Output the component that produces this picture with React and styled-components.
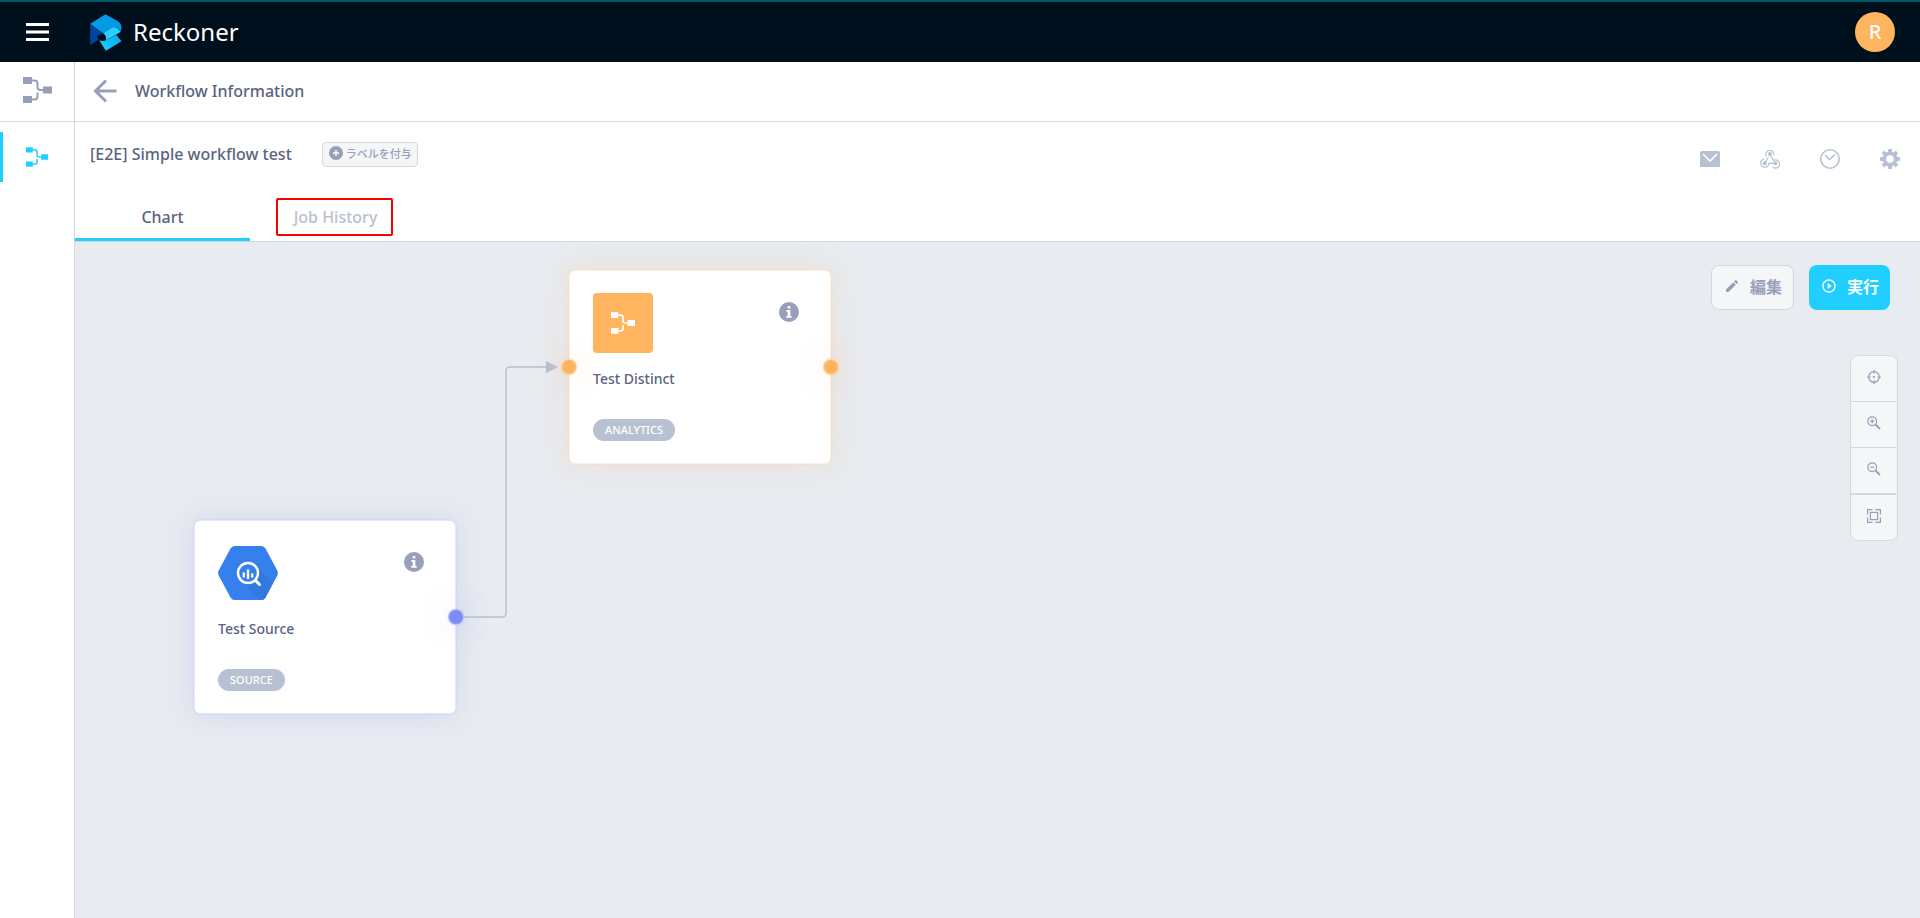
import React, { useState } from 'react';
import styled, { createGlobalStyle } from 'styled-components';
import { MdEdit, MdPlayCircleOutline } from 'react-icons/md';

const colors = {
  cyan: '#20cfff',
  orange: '#ffb55f',
  violet: '#7a8cf5',
  line: '#d0d9e1',
  text: '#5b6382',
  icon: '#979fb9',
  muted: '#b7c1d1',
  canvas: '#e8ebf0',
  panel: '#f4f6f8',
};

const GlobalStyle = createGlobalStyle`
  * {
    box-sizing: border-box;
  }

  body {
    margin: 0;
    background: #fff;
    color: ${colors.text};
    font-family: 'Noto Sans', 'Noto Sans CJK JP', sans-serif;
    font-size: 16px;
    font-weight: 500;
  }

  button {
    margin: 0;
    padding: 0;
    border: none;
    background: none;
    color: inherit;
    font: inherit;
    cursor: pointer;
  }

  svg {
    display: block;
    flex-shrink: 0;
  }
`;

const Page = styled.div`
  display: flex;
  flex-direction: column;
  min-height: 100vh;
`;

const TopBar = styled.header`
  display: flex;
  align-items: center;
  height: 62px;
  padding: 0 25px 0 26px;
  border-top: 2px solid #00586a;
  background: #000f1c;
  color: #fff;
`;

const Brand = styled.a`
  display: flex;
  align-items: center;
  gap: 11px;
  margin-left: 41px;
  color: #fff;
  font-size: 24px;
  font-weight: 400;
  line-height: 36px;
  text-decoration: none;
`;

const Avatar = styled.button`
  width: 40px;
  height: 40px;
  margin-left: auto;
  border-radius: 50%;
  background: ${colors.orange};
  font-size: 20px;
  line-height: 40px;
`;

const Body = styled.div`
  display: flex;
  flex: 1;
`;

const Sidebar = styled.nav`
  display: flex;
  flex-direction: column;
  width: 75px;
  border-right: 1px solid ${colors.line};
`;

const SidebarHead = styled.div`
  display: flex;
  align-items: center;
  justify-content: center;
  height: 60px;
  margin-bottom: 10px;
  padding-bottom: 4px;
  border-bottom: 1px solid ${colors.line};
  color: ${colors.icon};
`;

const SidebarLink = styled.a`
  display: flex;
  align-items: center;
  justify-content: center;
  height: 50px;
  padding-right: 3px;
  border-left: 3px solid ${colors.cyan};
  color: ${colors.cyan};
`;

const Main = styled.main`
  display: flex;
  flex: 1;
  flex-direction: column;
  min-width: 0;
`;

const PageHead = styled.div`
  display: flex;
  align-items: center;
  gap: 18px;
  height: 60px;
  padding: 0 18px 2px;
  border-bottom: 1px solid ${colors.line};
`;

const PageTitle = styled.h1`
  margin: 0;
  font-size: 16px;
  font-weight: 500;
  line-height: 24px;
`;

const BackButton = styled.button`
  color: ${colors.icon};
`;

const WorkflowHead = styled.div`
  display: flex;
  align-items: center;
  height: 72px;
  padding: 0 20px 8px 15px;
`;

const WorkflowName = styled.h2`
  margin: 0 30px 0 0;
  font-size: 16px;
  font-weight: 500;
  line-height: 24px;
`;

const LabelButton = styled.button`
  display: flex;
  align-items: center;
  gap: 3px;
  height: 25px;
  padding: 0 5px 2px 6px;
  border: 1px solid ${colors.line};
  border-radius: 4px;
  background: ${colors.panel};
  color: ${colors.icon};
  font-size: 11px;
`;

const HeadActions = styled.div`
  display: flex;
  gap: 40px;
  margin-left: auto;
  padding-top: 10px;
  color: ${colors.muted};
`;

const Tabs = styled.div`
  display: flex;
  height: 48px;
  border-bottom: 1px solid ${colors.line};
`;

const Tab = styled.button`
  display: flex;
  align-items: center;
  justify-content: center;
  width: 175px;
  padding-top: 2px;
  border-bottom: 3px solid ${({ $active }) => ($active ? colors.cyan : 'transparent')};
  color: ${({ $active }) => ($active ? colors.text : colors.muted)};
`;

const Marked = styled.span`
  margin-right: 6px;
  padding: 5px 14px 5px 16px;
  border: 2px solid #f60000;
  border-radius: 2px;
  line-height: 24px;
`;

const Canvas = styled.section`
  position: relative;
  flex: 1;
  min-height: 560px;
  background: ${colors.canvas};
  overflow: hidden;
`;

const Edges = styled.svg`
  position: absolute;
  top: 0;
  left: 0;
  width: 100%;
  height: 100%;
`;

const Node = styled.article`
  position: absolute;
  display: flex;
  flex-direction: column;
  align-items: flex-start;
  width: 262px;
  height: 194px;
  padding: 22px 23px;
  border: 1px solid rgba(${({ $glow }) => $glow}, 0.2);
  border-radius: 6px;
  background: #fff;
  box-shadow: 0 0 2px rgba(${({ $glow }) => $glow}, 0.25), 0 0 30px rgba(${({ $glow }) => $glow}, 0.2);
`;

const NodeTop = styled.div`
  display: flex;
  justify-content: space-between;
  width: 100%;
  padding-right: 8px;
`;

const InfoButton = styled.button`
  align-self: flex-start;
  margin-top: 9px;
`;

const NodeIcon = styled.div`
  display: flex;
  align-items: center;
  justify-content: center;
  width: 60px;
  height: 60px;
  border-radius: 4px;
  background: ${({ $fill }) => $fill || 'transparent'};
  color: #fff;
`;

const NodeName = styled.h3`
  margin: 16px 0 30px;
  font-size: 14px;
  font-weight: 500;
  line-height: 20px;
`;

const Tag = styled.span`
  padding: 0 12px;
  border-radius: 11px;
  background: ${colors.muted};
  color: #fff;
  font-size: 11px;
  line-height: 22px;
`;

const Port = styled.span`
  position: absolute;
  top: 88px;
  ${({ $side }) => $side}: -9px;
  width: 16px;
  height: 16px;
  border: 1px solid rgba(255, 255, 255, 0.5);
  border-radius: 50%;
  background: ${({ $fill }) => $fill};
  box-shadow: 0 0 2px rgba(${({ $glow }) => $glow}, 0.4), 0 0 30px rgba(${({ $glow }) => $glow}, 0.25);
`;

const CanvasActions = styled.div`
  position: absolute;
  top: 23px;
  right: 30px;
  display: flex;
  gap: 15px;
`;

const ActionButton = styled.button`
  display: flex;
  align-items: center;
  gap: 10px;
  height: 45px;
  padding: 0 11px 4px 12px;
  border: ${({ $primary }) => ($primary ? 'none' : `1px solid ${colors.line}`)};
  border-radius: 8px;
  background: ${({ $primary }) => ($primary ? colors.cyan : colors.panel)};
  color: ${({ $primary }) => ($primary ? '#fff' : colors.icon)};
  font-weight: 700;
`;

const ZoomBar = styled.div`
  position: absolute;
  top: 113px;
  right: 22px;
  display: flex;
  flex-direction: column;
  width: 48px;
  padding-right: 1px;
  border: 1px solid ${colors.line};
  border-radius: 8px;
  background: ${colors.panel};
`;

const ZoomButton = styled.button`
  display: flex;
  align-items: center;
  justify-content: center;
  height: 46px;
  padding-bottom: 3px;
  color: ${colors.icon};

  &:not(:last-child) {
    border-bottom: 1px solid ${colors.line};
  }

  &:last-child {
    border-top: 1px solid ${colors.line};
  }
`;

const MenuIcon = () => (
  <svg width="23" height="20" viewBox="0 0 23 20" fill="#fff">
    <path d="M0 1h23v3H0zM0 8.500h23v3H0zM0 16h23v3H0z" />
  </svg>
);

const Logo = () => (
  <svg width="32" height="37" viewBox="270 40 95 111">
    <defs>
      <linearGradient id="ribbon" x1="0" y1="1" x2="1" y2="0">
        <stop offset="0" stopColor="#19d3ff" />
        <stop offset="1" stopColor="#0aa5f5" />
      </linearGradient>
    </defs>
    <path fill="#00439c" d="M270 69L309 97L290 107L295 117L270 134Z" />
    <path fill="#009be6" d="M270 69L316 41L352 61Q364 68 364 82L361 94Q355 78 338 79L309 98Z" />
    <path fill="#2bcfff" d="M309 98L338 79Q354 79 361 94L318 119Q319 104 309 98Z" />
    <path fill="url(#ribbon)" d="M297 119Q307 123 318 119L348 102L364 122L317 150Z" />
  </svg>
);

const FlowIcon = ({ width = 29 }) => (
  <svg width={width} height={Math.round(width * 0.9)} viewBox="0 0 29 26" fill="none" stroke="currentColor" strokeWidth="2">
    <path fill="currentColor" stroke="none" d="M0 0h9v7H0zM0 19h9v7H0zM20 9.500h9v7h-9z" />
    <path d="M9 3.500h2.500q3 0 3 3v3.500q0 3 3 3H20M9 22.500h2.500q3 0 3-3V15.500" />
  </svg>
);

const BackIcon = () => (
  <svg width="24" height="24" viewBox="0 0 24 24" fill="none" stroke="currentColor" strokeWidth="3">
    <path d="M23.500 12H2M13 1.500L2.500 12L13 22.500" />
  </svg>
);

const PlusIcon = () => (
  <svg width="14" height="14" viewBox="0 0 14 14">
    <circle cx="7" cy="7" r="7" fill="currentColor" />
    <path stroke="#fff" strokeWidth="1.4" d="M7 4v6M4 7h6" />
  </svg>
);

const MailIcon = () => (
  <svg width="20" height="20" viewBox="0 0 20 20">
    <rect y="2" width="20" height="16" rx="1.500" fill="currentColor" />
    <path fill="none" stroke="#fff" strokeWidth="1.600" d="M3 5l7 7l7-7" />
  </svg>
);

const WebhookIcon = () => (
  <svg width="20" height="20" viewBox="0 0 20 20" fill="none" stroke="currentColor" strokeWidth="1.200">
    <path d="M6.500 7.500A4 4 0 1 1 13.800 6M10 5.300l3.600 6.200a4 4 0 1 1-.8 6.500M15.300 14.300H8.800a4 4 0 1 1-4.500-4.100M4.700 14.300l3.500-6" />
    <g fill="currentColor" stroke="none">
      <circle cx="10" cy="5" r="2" />
      <circle cx="4.700" cy="14.300" r="2" />
      <circle cx="15.300" cy="14.300" r="2" />
    </g>
  </svg>
);

const ClockIcon = () => (
  <svg width="20" height="20" viewBox="0 0 20 20" fill="none" stroke="currentColor" strokeWidth="1.600">
    <circle cx="10" cy="10" r="9.200" />
    <path d="M5 6l4.500 4.500L15 5.500" />
  </svg>
);

const GearIcon = () => (
  <svg width="20" height="20" viewBox="0 0 20 20">
    <g fill="currentColor">
      {[0, 45, 90, 135].map((angle) => (
        <rect key={angle} x="8" y="0" width="4" height="20" rx="1" transform={`rotate(${angle} 10 10)`} />
      ))}
      <circle cx="10" cy="10" r="7.500" />
    </g>
    <circle cx="10" cy="10" r="3.800" fill="#fff" />
  </svg>
);

const InfoIcon = () => (
  <svg width="20" height="20" viewBox="0 0 20 20">
    <circle cx="10" cy="10" r="10" fill={colors.icon} />
    <path fill="#fff" d="M8.700 4h2.600v2.500H8.700zM7.300 8h4v6h1.400v1.700H7.300V14h1.400V9.700H7.300z" />
  </svg>
);

const BigQueryIcon = () => (
  <svg width="60" height="54" viewBox="0 0 60 54">
    <path fill="#3680ed" d="M17 0H43Q46 0 47.500 2.500L59.300 24.500Q60.500 27 59.300 29.500L47.500 51.500Q46 54 43 54H17Q14 54 12.500 51.500L.7 29.500Q-.5 27 .7 24.500L12.500 2.500Q14 0 17 0Z" />
    <path fill="#3278de" d="M37 19.500L55 37L47.500 51.500Q46 54 43 54H42L23.500 35L31 37L38 33Z" />
    <circle cx="30" cy="27" r="10" fill="#3680ed" stroke="#fff" strokeWidth="2.400" />
    <path stroke="#fff" strokeWidth="2.400" d="M30 23.500v9.500M25.800 26.500v5M34.200 27.500v4" />
    <path stroke="#fff" strokeWidth="3" strokeLinecap="round" d="M38 35l3.500 3.500" />
  </svg>
);

const ToolIcon = ({ children }) => (
  <svg width="14" height="14" viewBox="0 0 14 14" fill="none" stroke="currentColor" strokeWidth="1.200">
    {children}
  </svg>
);

const zoomTools = [
  {
    label: 'Center',
    icon: (
      <>
        <circle cx="7" cy="7" r="5.300" />
        <path d="M7 0v3.500M7 10.500V14M0 7h3.500M10.500 7H14" />
        <circle cx="7" cy="7" r="1.100" fill="currentColor" stroke="none" />
      </>
    ),
  },
  {
    label: 'Zoom in',
    icon: (
      <>
        <circle cx="5.200" cy="5.200" r="4.400" />
        <path d="M3.200 5.200h4M5.200 3.200v4" />
        <path strokeWidth="1.800" d="M8.500 8.500l4.500 4.500" />
      </>
    ),
  },
  {
    label: 'Zoom out',
    icon: (
      <>
        <circle cx="5.200" cy="5.200" r="4.400" />
        <path d="M3.200 5.200h4" />
        <path strokeWidth="1.800" d="M8.500 8.500l4.500 4.500" />
      </>
    ),
  },
  {
    label: 'Fit to screen',
    icon: (
      <>
        <rect x="3.400" y="3.400" width="7.200" height="7.200" />
        <path d="M.6 5.500V.6H5.500M8.500 .6h4.900V5.500M13.400 8.500v4.900H8.500M5.500 13.400H.6V8.500" />
      </>
    ),
  },
];

const headTools = [
  { label: 'Mail', Icon: MailIcon },
  { label: 'Webhook', Icon: WebhookIcon },
  { label: 'Schedule', Icon: ClockIcon },
  { label: 'Settings', Icon: GearIcon },
];

const nodes = [
  {
    name: 'Test Source',
    tag: 'SOURCE',
    x: 119,
    y: 278,
    color: colors.violet,
    glow: '122, 140, 245',
    icon: <BigQueryIcon />,
    ports: ['right'],
  },
  {
    name: 'Test Distinct',
    tag: 'ANALYTICS',
    x: 494,
    y: 28,
    color: colors.orange,
    glow: '255, 181, 95',
    fill: colors.orange,
    icon: <FlowIcon width={24} />,
    ports: ['left', 'right'],
  },
];

const WorkflowNode = ({ node }) => (
  <Node $glow={node.glow} style={{ left: node.x, top: node.y }}>
    <NodeTop>
      <NodeIcon $fill={node.fill}>{node.icon}</NodeIcon>
      <InfoButton type="button" aria-label={`${node.name} info`}>
        <InfoIcon />
      </InfoButton>
    </NodeTop>
    <NodeName>{node.name}</NodeName>
    <Tag>{node.tag}</Tag>
    {node.ports.map((side) => (
      <Port key={side} $side={side} $fill={node.color} $glow={node.glow} />
    ))}
  </Node>
);

const App = () => {
  const [tab, setTab] = useState('chart');

  return (
    <Page>
      <GlobalStyle />
      <TopBar>
        <button type="button" aria-label="Menu">
          <MenuIcon />
        </button>
        <Brand href="#">
          <Logo />
          Reckoner
        </Brand>
        <Avatar type="button">R</Avatar>
      </TopBar>
      <Body>
        <Sidebar>
          <SidebarHead>
            <FlowIcon />
          </SidebarHead>
          <SidebarLink href="#" aria-label="Workflows">
            <FlowIcon width={22} />
          </SidebarLink>
        </Sidebar>
        <Main>
          <PageHead>
            <BackButton type="button" aria-label="Back">
              <BackIcon />
            </BackButton>
            <PageTitle>Workflow Information</PageTitle>
          </PageHead>
          <WorkflowHead>
            <WorkflowName>[E2E] Simple workflow test</WorkflowName>
            <LabelButton type="button">
              <PlusIcon />
              ラベルを付与
            </LabelButton>
            <HeadActions>
              {headTools.map(({ label, Icon }) => (
                <button key={label} type="button" aria-label={label}>
                  <Icon />
                </button>
              ))}
            </HeadActions>
          </WorkflowHead>
          <Tabs role="tablist">
            <Tab type="button" role="tab" $active={tab === 'chart'} onClick={() => setTab('chart')}>
              Chart
            </Tab>
            <Tab type="button" role="tab" $active={tab === 'history'} onClick={() => setTab('history')}>
              <Marked>Job History</Marked>
            </Tab>
          </Tabs>
          <Canvas>
            <Edges fill="none">
              <path stroke={colors.muted} strokeWidth="1.500" d="M381 375H427q4 0 4-4V129q0-4 4-4H472" />
              <path fill={colors.muted} d="M471 119l12 6l-12 6z" />
            </Edges>
            {nodes.map((node) => (
              <WorkflowNode key={node.name} node={node} />
            ))}
            <CanvasActions>
              <ActionButton type="button">
                <MdEdit size={16} />
                編集
              </ActionButton>
              <ActionButton type="button" $primary>
                <MdPlayCircleOutline size={16} />
                実行
              </ActionButton>
            </CanvasActions>
            <ZoomBar>
              {zoomTools.map(({ label, icon }) => (
                <ZoomButton key={label} type="button" aria-label={label}>
                  <ToolIcon>{icon}</ToolIcon>
                </ZoomButton>
              ))}
            </ZoomBar>
          </Canvas>
        </Main>
      </Body>
    </Page>
  );
};

export default App;
